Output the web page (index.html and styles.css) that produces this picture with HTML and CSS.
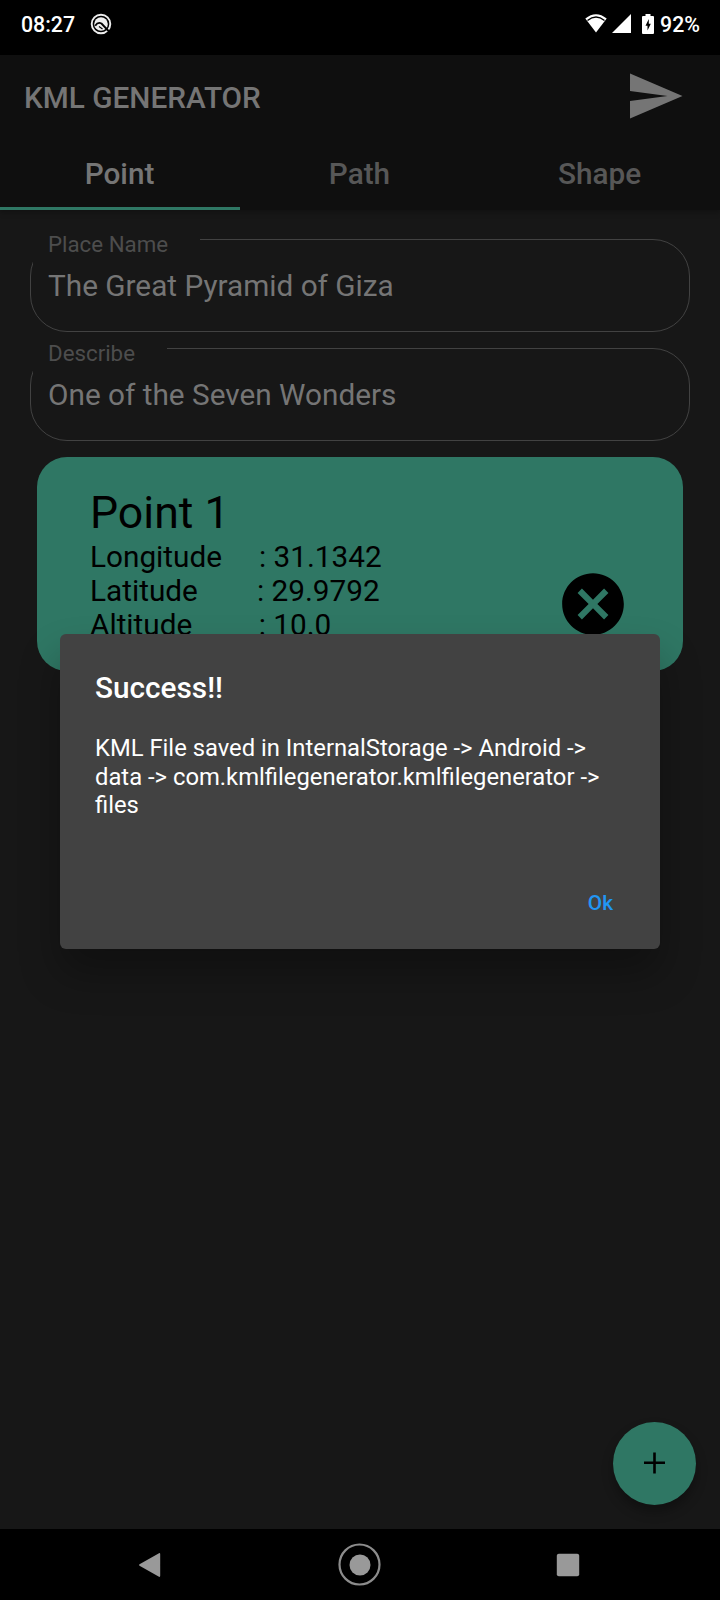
FILE: index.html
```html
<!DOCTYPE html>
<html lang="en">
<head>
  <meta charset="UTF-8">
  <meta name="viewport" content="width=device-width, initial-scale=1.0">
  <title>KML Generator</title>
  <link rel="stylesheet" href="styles.css">
</head>
<body>
  <div class="status-bar">
    <span class="clock">08:27</span>
    <svg class="status-q" viewBox="0 0 22 22">
      <circle cx="11" cy="11" r="9.3" fill="none" stroke="#eee" stroke-width="1.9"/>
      <circle cx="11" cy="11" r="6.8" fill="#eee"/>
      <path d="M5.200 12.800Q8 8.500 11.500 10.500L19 18.500" fill="none" stroke="#000" stroke-width="1.900"/>
      <path d="M9 13.500l3.500 2.500" fill="none" stroke="#000" stroke-width="1.200"/>
    </svg>
    <div class="status-right">
      <svg class="wifi" viewBox="0 0 22 19">
        <path d="M0.300 4.500Q11-4 21.700 4.500L11 18.500z" fill="#fff"/>
        <path d="M2.500 6.500Q11-0.300 19.500 6.500" fill="none" stroke="#000" stroke-width="1.500"/>
      </svg>
      <svg class="signal" viewBox="0 0 19 19"><path d="M0 19L19 0v19z" fill="#fff"/></svg>
      <svg class="battery" viewBox="0 0 12 20">
        <path d="M3.500 0h5v2H11a1 1 0 0 1 1 1v16a1 1 0 0 1-1 1H1a1 1 0 0 1-1-1V3a1 1 0 0 1 1-1h2.500z" fill="#fff"/>
        <path d="M6.800 5L3.500 11.800h2V16.500L8.800 9.700h-2z" fill="#000"/>
      </svg>
      <span class="clock">92%</span>
    </div>
  </div>

  <div class="screen">
    <header class="app-bar">
      <div class="title-row">
        <h1>KML GENERATOR</h1>
        <svg class="send" viewBox="0 0 24 24"><path d="M2.010 21L23 12 2.010 3 2 10l15 2-15 2z"/></svg>
      </div>
      <nav class="tabs">
        <div class="tab active">Point</div>
        <div class="tab">Path</div>
        <div class="tab">Shape</div>
      </nav>
    </header>

    <main class="content">
      <div class="field">
        <div class="field-label place">Place Name</div>
        <div class="field-value">The Great Pyramid of Giza</div>
      </div>
      <div class="field">
        <div class="field-label describe">Describe</div>
        <div class="field-value">One of the Seven Wonders</div>
      </div>

      <div class="card">
        <div class="card-text">
          <h2>Point 1</h2>
          <p>Longitude     : 31.1342</p>
          <p>Latitude        : 29.9792</p>
          <p>Altitude         : 10.0</p>
        </div>
        <svg class="cancel" viewBox="0 0 24 24"><path d="M12 2C6.470 2 2 6.470 2 12s4.470 10 10 10 10-4.470 10-10S17.530 2 12 2zm5 13.590L15.590 17 12 13.410 8.410 17 7 15.590 10.590 12 7 8.410 8.410 7 12 10.590 15.590 7 17 8.410 13.410 12 17 15.590z"/></svg>
      </div>
    </main>

    <div class="fab">
      <svg viewBox="0 0 22 22"><path d="M11.500 0.500v21M1 10.800h21" stroke="#000" stroke-width="2.600"/></svg>
    </div>

    <div class="overlay">
      <div class="dialog">
        <h3>Success!!</h3>
        <p>KML File saved in InternalStorage -&gt; Android -&gt; data -&gt; com.kmlfilegenerator.kmlfilegenerator -&gt; files</p>
        <div class="dialog-actions"><span class="ok">Ok</span></div>
      </div>
    </div>
  </div>

  <div class="nav-bar">
    <svg viewBox="0 0 44 44"><path d="M11.500 21.200L31 10.200q1.200-.5 1.200 1v21.600q0 1.500-1.200 1L11.500 22.800q-1-.8 0-1.600z" fill="#999"/></svg>
    <svg viewBox="0 0 44 44"><circle cx="22.500" cy="21.500" r="20" fill="none" stroke="#8c8c8c" stroke-width="2.200"/><circle cx="23" cy="22" r="10.500" fill="#999"/></svg>
    <svg viewBox="0 0 44 44"><rect x="10.800" y="10.800" width="22.400" height="22.400" rx="2" fill="#999"/></svg>
  </div>
</body>
</html>
```
FILE: styles.css
```css
* {
  box-sizing: border-box;
}

body {
  margin: 0;
  height: 1600px;
  display: flex;
  flex-direction: column;
  overflow: hidden;
  background-color: #000;
  font-family: Roboto, sans-serif;
}

h1, h2, h3, p {
  margin: 0;
  font-weight: 400;
}

svg {
  display: block;
  flex: none;
}

/* status bar */
.status-bar {
  height: 55px;
  padding: 0 20px 8px 21px;
  display: flex;
  align-items: center;
  color: #fff;
  font-size: 21.3px;
  font-weight: 500;
}

.clock {
  padding-top: 2px;
}

.status-q {
  width: 22px;
  height: 22px;
  margin-left: 15px;
}

.status-right {
  margin-left: auto;
  display: flex;
  align-items: center;
}

.wifi {
  width: 22px;
  height: 19px;
  margin-right: 5px;
}

.signal {
  width: 19px;
  height: 19px;
  margin-right: 11px;
}

.battery {
  width: 12px;
  height: 20px;
  margin-right: 6px;
}

/* app */
.screen {
  position: relative;
  height: 1474px;
  background-color: #171717;
}

.app-bar {
  height: 155px;
  background-color: #0f0f0f;
  box-shadow: 0 2px 6px rgba(0, 0, 0, 0.3);
}

.title-row {
  height: 84px;
  padding: 0 35px 0 24px;
  display: flex;
  align-items: center;
  justify-content: space-between;
}

.title-row h1 {
  font-size: 29.75px;
  font-weight: 500;
  color: #757575;
}

.send {
  width: 60px;
  height: 60px;
  margin-bottom: 2px;
  fill: #757575;
}

.tabs {
  display: flex;
  height: 71px;
}

.tab {
  flex: 1;
  display: flex;
  align-items: center;
  justify-content: center;
  padding-right: 1px;
  border-bottom: 3px solid transparent;
  color: #575757;
  font-size: 29.75px;
  font-weight: 500;
}

.tab.active {
  border-bottom-color: #2f7764;
  color: #757575;
}

.content {
  padding: 29px 30px 0;
}

.field {
  height: 93px;
  margin-bottom: 15.5px;
  border: 1px solid #424242;
  border-radius: 37px;
}

.field-label {
  height: 25px;
  margin: -1px 0 0 2px;
  padding-left: 15px;
  line-height: 11px;
  background-color: #171717;
  color: #4d4d4d;
  font-size: 22.3px;
}

.place {
  width: 167px;
}

.describe {
  width: 134px;
}

.field-value {
  padding-left: 17px;
  color: #757575;
  font-size: 29.75px;
  line-height: 43px;
}

.card {
  height: 214px;
  margin: 16.5px 7px 0;
  padding: 30px 53px;
  display: flex;
  justify-content: space-between;
  align-items: center;
  background-color: #2f7764;
  border-radius: 30px;
}

.card h2 {
  font-size: 44.6px;
  line-height: 53px;
}

.card p {
  font-size: 29.75px;
  line-height: 34px;
  white-space: pre;
}

.cancel {
  width: 74px;
  height: 74px;
  margin-top: 80px;
}

.fab {
  position: absolute;
  right: 24px;
  bottom: 24px;
  width: 83px;
  height: 83px;
  padding: 0 1px 1px 0;
  display: flex;
  align-items: center;
  justify-content: center;
  background-color: #2f7764;
  border-radius: 50%;
  box-shadow: 0 7px 12px rgba(0, 0, 0, 0.3);
}

.fab svg {
  width: 22px;
  height: 22px;
}

/* dialog */
.overlay {
  position: absolute;
  inset: 0;
  display: flex;
  align-items: center;
  justify-content: center;
  padding-bottom: 1px;
}

.dialog {
  width: 600px;
  height: 315px;
  padding: 36px 35px 23px;
  display: flex;
  flex-direction: column;
  background-color: #424242;
  border-radius: 6px;
  box-shadow: 0 24px 40px rgba(0, 0, 0, 0.3);
  color: #fff;
}

.dialog h3 {
  font-size: 29.75px;
  font-weight: 500;
  line-height: 36px;
}

.dialog p {
  margin-top: 28px;
  font-size: 23.8px;
  line-height: 28.5px;
}

.dialog-actions {
  margin-top: auto;
  display: flex;
  justify-content: flex-end;
}

.ok {
  padding: 11px 12px 11px 11px;
  color: #2196f3;
  font-size: 20.8px;
  font-weight: 500;
}

.nav-bar {
  height: 71px;
  padding: 0 130px 0 128px;
  display: flex;
  align-items: center;
  justify-content: space-between;
}

.nav-bar svg {
  width: 44px;
  height: 44px;
}
```
